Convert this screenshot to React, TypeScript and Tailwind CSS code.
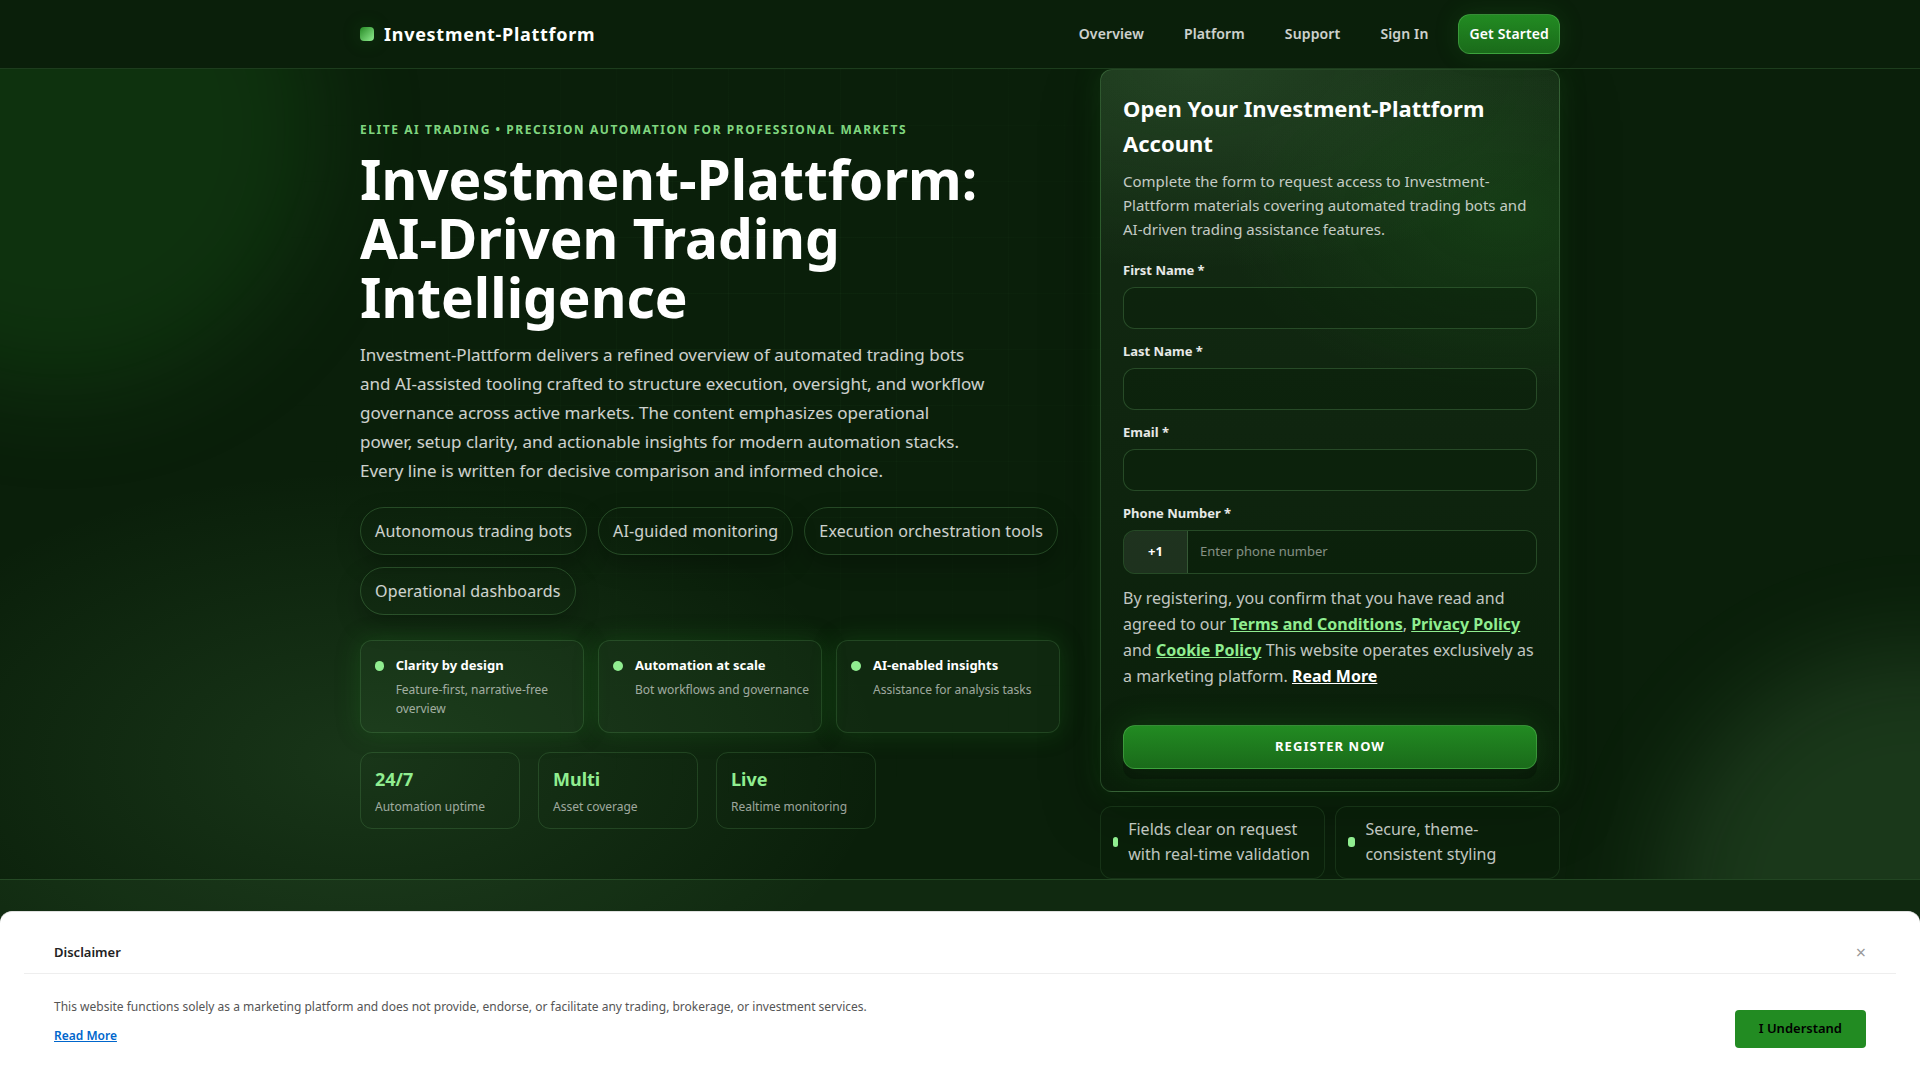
import { useState } from "react";

const NAV_LINKS = ["Overview", "Platform", "Support", "Sign In"];

const CHIPS = [
  "Autonomous trading bots",
  "AI-guided monitoring",
  "Execution orchestration tools",
  "Operational dashboards",
];

const FEATURES = [
  { title: "Clarity by design", text: "Feature-first, narrative-free overview" },
  { title: "Automation at scale", text: "Bot workflows and governance" },
  { title: "AI-enabled insights", text: "Assistance for analysis tasks" },
];

const STATS = [
  { value: "24/7", label: "Automation uptime" },
  { value: "Multi", label: "Asset coverage" },
  { value: "Live", label: "Realtime monitoring" },
];

const FIELDS = [
  { id: "first-name", label: "First Name *", type: "text" },
  { id: "last-name", label: "Last Name *", type: "text" },
  { id: "email", label: "Email *", type: "email" },
];

const TRUST = ["Fields clear on request with real-time validation", "Secure, theme-consistent styling"];

function Header() {
  return (
    <header className="relative z-10 border-b border-[#90ee90]/15 bg-[#0a1f0a]">
      <div className="mx-auto flex max-w-[1200px] items-center justify-between py-3.5">
        <a href="#" className="flex items-center gap-2.5 text-lg leading-7 font-bold tracking-[0.04em] text-white">
          <span className="size-3.5 rounded bg-linear-135 from-[#228b22] to-[#90ee90] shadow-[0_0_18px_rgba(34,139,34,0.25)]" />
          Investment-Plattform
        </a>
        <nav className="flex items-center gap-5 text-sm font-semibold tracking-[0.01em]">
          {NAV_LINKS.map(link => (
            <a key={link} href="#" className="px-2.5 leading-[22px] text-white/80">{link}</a>
          ))}
          <a
            href="#"
            className="rounded-xl border border-[#90ee90]/25 bg-linear-to-b from-[#228b22] to-[#1a6b1a] px-2.5 py-2 leading-[22px] text-white shadow-[0_0_24px_rgba(34,139,34,0.2)]"
          >
            Get Started
          </a>
        </nav>
      </div>
    </header>
  );
}

function HeroCopy() {
  return (
    <div>
      <p className="text-xs leading-[19px] font-bold tracking-[0.13em] text-[#90ee90]/90 uppercase">
        Elite AI Trading • Precision Automation for Professional Markets
      </p>
      <h1 className="mt-2.5 max-w-[640px] text-[55px] leading-[59px] font-bold text-white">
        Investment-Plattform: AI-Driven Trading Intelligence
      </h1>
      <p className="mt-3.5 max-w-[625px] text-[17px] leading-[29px] text-white/80">
        Investment-Plattform delivers a refined overview of automated trading bots and AI-assisted tooling crafted to
        structure execution, oversight, and workflow governance across active markets. The content emphasizes
        operational power, setup clarity, and actionable insights for modern automation stacks. Every line is written
        for decisive comparison and informed choice.
      </p>

      <ul className="mt-[22px] flex flex-wrap gap-x-[11px] gap-y-3">
        {CHIPS.map(chip => (
          <li
            key={chip}
            className="rounded-full border border-[#90ee90]/20 px-3.5 py-2.5 leading-[26px] tracking-[0.01em] text-white/80 shadow-[0_10px_24px_rgba(0,0,0,0.25)]"
          >
            {chip}
          </li>
        ))}
      </ul>

      <div className="mt-[25px] grid grid-cols-3 gap-3.5">
        {FEATURES.map(f => (
          <div
            key={f.title}
            className="flex items-start gap-3 rounded-xl border border-[#90ee90]/15 bg-[#90ee90]/5 py-3.5 pr-2.5 pl-3.5 shadow-[0_0_24px_rgba(34,139,34,0.25)]"
          >
            <span className="mt-1.5 h-2.5 w-2.5 rounded-full bg-[#90ee90]" />
            <div>
              <h3 className="text-[13px] leading-[21px] font-bold text-white">{f.title}</h3>
              <p className="mt-1 text-xs leading-[19px] text-white/60">{f.text}</p>
            </div>
          </div>
        ))}
      </div>

      <div className="mt-[19px] flex gap-[18px]">
        {STATS.map(s => (
          <div key={s.label} className="min-w-[160px] rounded-xl border border-[#90ee90]/15 px-3.5 py-3">
            <div className="text-lg leading-7 font-bold text-[#90ee90]">{s.value}</div>
            <div className="mt-1 text-xs leading-[19px] text-white/60">{s.label}</div>
          </div>
        ))}
      </div>
    </div>
  );
}

function SignupForm() {
  return (
    <form
      onSubmit={e => e.preventDefault()}
      className="rounded-xl border border-[#90ee90]/20 bg-[radial-gradient(420px_200px_at_20%_0%,rgba(144,238,144,0.12),transparent),radial-gradient(280px_180px_at_88%_20%,rgba(34,139,34,0.2),transparent),linear-gradient(180deg,#142b14,#0a1f0a)] px-[22px] pt-[21px] pb-[22px] shadow-[0_0_28px_rgba(34,139,34,0.2),0_20px_60px_rgba(0,0,0,0.3)]"
    >
      <h2 className="text-[22px] leading-[35px] font-bold text-white">Open Your Investment-Plattform Account</h2>
      <p className="mt-2 text-[15px] leading-6 text-white/75">
        Complete the form to request access to Investment-Plattform materials covering automated trading bots and
        AI-driven trading assistance features.
      </p>

      <div className="mt-[19px] flex flex-col gap-3">
        {FIELDS.map(f => (
          <div key={f.id} className="flex flex-col gap-1.5">
            <label htmlFor={f.id} className="text-[13px] leading-[21px] font-bold text-white/90">{f.label}</label>
            <input
              id={f.id}
              type={f.type}
              className="h-[42px] rounded-xl border border-[#90ee90]/20 bg-[#0a1f0a]/50 px-3 text-[13px] text-white"
            />
          </div>
        ))}
        <div className="flex flex-col gap-1.5">
          <label htmlFor="phone" className="text-[13px] leading-[21px] font-bold text-white/90">Phone Number *</label>
          <div className="flex h-11 overflow-hidden rounded-xl border border-[#90ee90]/20 bg-[#0a1f0a]/50">
            <span className="flex w-16 items-center justify-center border-r border-[#90ee90]/20 bg-white/8 text-[13px] font-bold text-white">
              +1
            </span>
            <input
              id="phone"
              type="tel"
              placeholder="Enter phone number"
              className="min-w-0 flex-1 px-3 text-[13px] text-white placeholder:text-white/50"
            />
          </div>
        </div>
      </div>

      <p className="mt-[11px] leading-[26px] text-white/75">
        By registering, you confirm that you have read and agreed to our{" "}
        <a href="#" className="font-bold text-[#90ee90] underline">Terms and Conditions</a>,{" "}
        <a href="#" className="font-bold text-[#90ee90] underline">Privacy Policy</a> and{" "}
        <a href="#" className="font-bold text-[#90ee90] underline">Cookie Policy</a> This website operates exclusively
        as a marketing platform. <a href="#" className="font-bold text-white underline">Read More</a>
      </p>

      <button
        type="submit"
        className="mt-9 h-11 w-full rounded-xl border border-[#90ee90]/25 bg-linear-to-b from-[#228b22] to-[#1a6b1a] text-[13px] font-bold tracking-[0.08em] text-white uppercase shadow-[0_10px_0_rgba(0,0,0,0.25),0_0_30px_rgba(34,139,34,0.25)]"
      >
        Register Now
      </button>
    </form>
  );
}

function Disclaimer({ onClose }: { onClose: () => void }) {
  return (
    <div
      role="dialog"
      aria-label="Disclaimer"
      className="fixed inset-x-0 bottom-0 z-20 rounded-t-xl border-t border-[#e0e0e0] bg-white px-6 pt-6 pb-8"
    >
      <div className="flex items-center justify-between border-b border-[#eee] px-[30px] pt-1.5 pb-2.5">
        <h2 className="text-[13px] leading-[21px] font-semibold text-[#222]">Disclaimer</h2>
        <button type="button" aria-label="Close" onClick={onClose} className="text-lg leading-[21px] text-[#999]">×</button>
      </div>
      <div className="flex items-end justify-between px-[30px] pt-[23px]">
        <div className="pb-[3px] text-xs leading-[19px]">
          <p className="text-[#555]">
            This website functions solely as a marketing platform and does not provide, endorse, or facilitate any
            trading, brokerage, or investment services.
          </p>
          <a href="#" className="mt-2.5 inline-block font-semibold text-[#06c] underline">Read More</a>
        </div>
        <button
          type="button"
          onClick={onClose}
          className="h-[38px] rounded bg-[#228b22] px-6 text-[13px] font-semibold text-black"
        >
          I Understand
        </button>
      </div>
    </div>
  );
}

export default function App() {
  const [open, setOpen] = useState(true);

  return (
    <div className="min-h-screen bg-[#0a1f0a] bg-[radial-gradient(520px_290px_at_19%_760px,rgba(144,238,144,0.11),transparent)] font-['Noto_Sans',sans-serif]">
      <Header />

      <section className="relative overflow-hidden">
        {/* Backdrop: glows and faint grid */}
        <div className="absolute -top-50 -left-50 size-[520px] rounded-full bg-[#228b22]/18 blur-[50px]" />
        <div className="absolute -right-[260px] -bottom-[290px] size-[520px] rounded-full bg-[#90ee90]/12 blur-[50px]" />
        <div className="absolute inset-0 bg-[linear-gradient(to_right,rgba(144,238,144,0.03)_1px,transparent_1px),linear-gradient(to_bottom,rgba(144,238,144,0.03)_1px,transparent_1px)] bg-size-[56px_56px] mask-[radial-gradient(circle_at_40%_30%,black,transparent_40%)]" />

        <div className="relative mx-auto grid max-w-[1200px] grid-cols-[minmax(0,1fr)_460px] items-center gap-10">
          <HeroCopy />
          <div>
            <SignupForm />
            <ul className="mt-3.5 grid grid-cols-2 gap-2.5">
              {TRUST.map(t => (
                <li
                  key={t}
                  className="flex items-center gap-2.5 rounded-xl border border-[#90ee90]/10 bg-[#0a1f0a]/60 px-3 pt-2.5 pb-[11px] leading-[25px] text-white/75"
                >
                  <span className="h-2.5 w-2.5 rounded-[3px] bg-[#90ee90]" />
                  <span>{t}</span>
                </li>
              ))}
            </ul>
          </div>
        </div>
      </section>

      <section className="h-[201px] border-t border-[#90ee90]/15 bg-[#90ee90]/5" />

      {open && <Disclaimer onClose={() => setOpen(false)} />}
    </div>
  );
}
